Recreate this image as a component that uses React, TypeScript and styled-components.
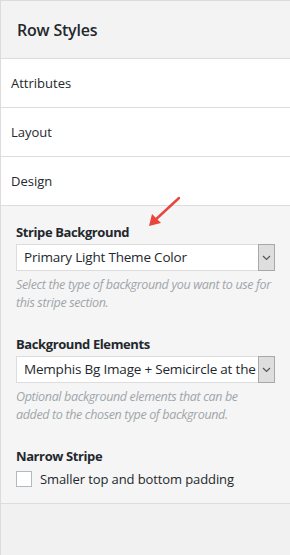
import * as React from "react";
import styled, { createGlobalStyle } from "styled-components";

// // // //

const GlobalStyle = createGlobalStyle`
    html, body {
        margin: 0;
        padding: 0;
        background: #ffffff;
    }
    body {
        font-family: "Open Sans", "Noto Sans", "Liberation Sans", sans-serif;
        color: #23282d;
    }
`;

const Panel = styled.div`
    position: relative;
    width: 290px;
    height: 555px;
    box-sizing: border-box;
    border-left: 1px solid #dcdcdc;
    border-top: 1px solid #dcdcdc;
    background: #f1f1f1;
    display: flex;
    flex-direction: column;
    overflow: hidden;
`;

const Header = styled.div`
    height: 57px;
    background: #f3f3f3;
    border-bottom: 1px solid #dcdcdc;
    display: flex;
    align-items: center;
    padding-left: 16px;
    font-size: 16px;
    font-weight: 600;
    letter-spacing: -0.2px;
    color: #23282d;
`;

const TabItem = styled.div`
    height: 48px;
    background: #ffffff;
    border-bottom: 1px solid #dddddd;
    display: flex;
    align-items: center;
    padding-left: 10px;
    font-size: 13px;
    color: #23282d;
`;

const Body = styled.div`
    background: #f5f5f5;
    border-bottom: 1px solid #dddddd;
    padding: 17px 15px 15px 15px;
    display: flex;
    flex-direction: column;
`;

const Field = styled.div<{ $gap?: number }>`
    display: flex;
    flex-direction: column;
    margin-bottom: ${p => p.$gap ?? 0}px;
`;

const Label = styled.div`
    font-size: 13px;
    font-weight: 700;
    letter-spacing: -0.4px;
    color: #23282d;
    line-height: 18px;
    margin-bottom: 3px;
`;

const SelectBox = styled.div`
    height: 27px;
    width: 259px;
    box-sizing: border-box;
    background: #ffffff;
    border: 1px solid #dddddd;
    display: flex;
    align-items: stretch;
`;

const SelectText = styled.div`
    flex: 1;
    overflow: hidden;
    white-space: nowrap;
    text-overflow: clip;
    padding-left: 7px;
    font-size: 13.5px;
    letter-spacing: -0.2px;
    line-height: 25px;
    color: #23282d;
`;

const SelectButton = styled.div`
    width: 15px;
    background: #dedede;
    border: 1px solid #a8a8a8;
    margin: -1px -1px -1px 0;
    display: flex;
    align-items: center;
    justify-content: center;
`;

const Help = styled.p`
    margin: 5px 0 0 0;
    font-size: 12.5px;
    font-style: italic;
    letter-spacing: -0.35px;
    line-height: 18px;
    color: #a0a5aa;
`;

const CheckRow = styled.label`
    display: flex;
    align-items: center;
    gap: 8px;
    margin-top: 2px;
    font-size: 13px;
    letter-spacing: -0.1px;
    color: #23282d;
`;

const CheckBox = styled.span`
    width: 16px;
    height: 16px;
    box-sizing: border-box;
    border: 1px solid #b4b9be;
    background: #ffffff;
`;

const Arrow = styled.svg`
    position: absolute;
    left: 144px;
    top: 194px;
`;

function Chevron() {
    return (
        <svg width="9" height="6" viewBox="0 0 9 6">
            <path d="M1 1l3.5 3.5L8 1" fill="none" stroke="#555" strokeWidth="1.2" />
        </svg>
    );
}

function Select(props: { value: string }) {
    return (
        <SelectBox>
            <SelectText>{props.value}</SelectText>
            <SelectButton>
                <Chevron />
            </SelectButton>
        </SelectBox>
    );
}

export default function App() {
    const tabs = ["Attributes", "Layout", "Design"];
    return (
        <>
            <GlobalStyle />
            <Panel>
                <Header>Row Styles</Header>
                {tabs.map(t => (
                    <TabItem key={t}>{t}</TabItem>
                ))}
                <Body>
                    <Field $gap={23}>
                        <Label>Stripe Background</Label>
                        <Select value="Primary Light Theme Color" />
                        <Help>
                            Select the type of background you want to use for
                            this stripe section.
                        </Help>
                    </Field>
                    <Field $gap={23}>
                        <Label>Background Elements</Label>
                        <Select value="Memphis Bg Image + Semicircle at the bottom" />
                        <Help>
                            Optional background elements that can be
                            <br />
                            added to the chosen type of background.
                        </Help>
                    </Field>
                    <Field>
                        <Label>Narrow Stripe</Label>
                        <CheckRow>
                            <CheckBox />
                            Smaller top and bottom padding
                        </CheckRow>
                    </Field>
                </Body>
                {/* annotation arrow */}
                <Arrow width="40" height="36" viewBox="0 0 40 36">
                    <path d="M34 3L8 27" stroke="#e8453c" strokeWidth="2.4" strokeLinecap="round" />
                    <path d="M4 31L7 19L16 28Z" fill="#e8453c" />
                </Arrow>
            </Panel>
        </>
    );
}
